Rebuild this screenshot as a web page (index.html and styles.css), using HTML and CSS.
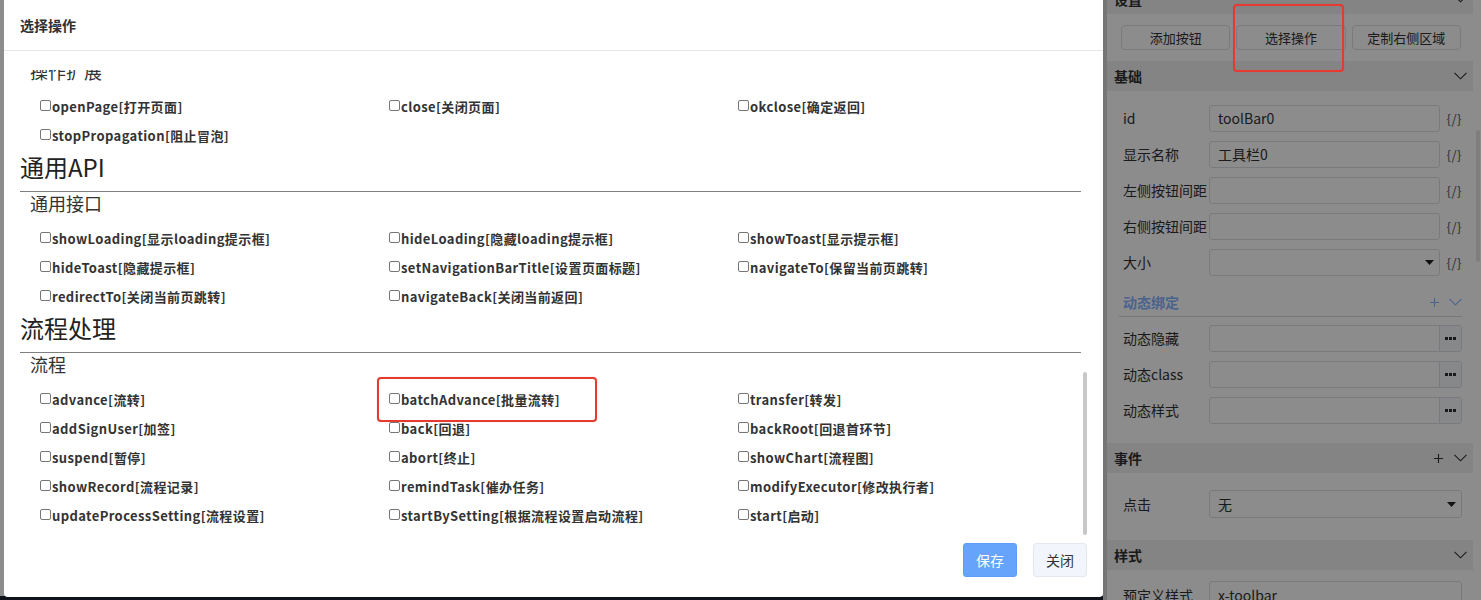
FILE: index.html
```html
<!DOCTYPE html>
<html lang="zh-CN">
<head>
<meta charset="utf-8">
<title>选择操作</title>
<link rel="stylesheet" href="styles.css">
</head>
<body>
<div class="app">
  <div class="workspace"><div class="ws-bottom"></div></div>
  <aside class="props">
    <div class="props-scroll">
      <section class="psec">
        <div class="psec-head"><span>设置</span><svg class="chev" width="13" height="8" viewBox="0 0 13 8"><polyline points="0.5,0.8 6.5,6.8 12.5,0.8"/></svg></div>
        <div class="btn-row">
          <button class="pbtn">添加按钮</button>
          <button class="pbtn">选择操作</button>
          <button class="pbtn">定制右侧区域</button>
        </div>
      </section>
      <section class="psec">
        <div class="psec-head"><span>基础</span><svg class="chev" width="13" height="8" viewBox="0 0 13 8"><polyline points="0.5,0.8 6.5,6.8 12.5,0.8"/></svg></div>
        <div class="psec-body">
          <div class="frow"><label class="flabel">id</label><div class="inp">toolBar0</div><span class="expr">{/}</span></div>
          <div class="frow"><label class="flabel">显示名称</label><div class="inp">工具栏0</div><span class="expr">{/}</span></div>
          <div class="frow"><label class="flabel">左侧按钮间距</label><div class="inp"></div><span class="expr">{/}</span></div>
          <div class="frow"><label class="flabel">右侧按钮间距</label><div class="inp"></div><span class="expr">{/}</span></div>
          <div class="frow"><label class="flabel">大小</label><div class="inp sel"><span></span><svg class="tri" width="9" height="5" viewBox="0 0 9 5"><path d="M0 0H9L4.5 5Z"/></svg></div><span class="expr">{/}</span></div>
          <div class="subhead"><span>动态绑定</span><span class="acts"><svg class="plus" width="9" height="9" viewBox="0 0 9 9"><path d="M4.5 0V9M0 4.5H9"/></svg><svg class="chev" width="13" height="8" viewBox="0 0 13 8"><polyline points="0.5,0.8 6.5,6.8 12.5,0.8"/></svg></span></div>
          <div class="frow"><label class="flabel">动态隐藏</label><div class="inp wide btnin"><span class="grow"></span><span class="more"><svg width="11" height="3" viewBox="0 0 11 3"><rect x="0" y="0" width="3" height="3"/><rect x="4" y="0" width="3" height="3"/><rect x="8" y="0" width="3" height="3"/></svg></span></div></div>
          <div class="frow"><label class="flabel">动态class</label><div class="inp wide btnin"><span class="grow"></span><span class="more"><svg width="11" height="3" viewBox="0 0 11 3"><rect x="0" y="0" width="3" height="3"/><rect x="4" y="0" width="3" height="3"/><rect x="8" y="0" width="3" height="3"/></svg></span></div></div>
          <div class="frow"><label class="flabel">动态样式</label><div class="inp wide btnin"><span class="grow"></span><span class="more"><svg width="11" height="3" viewBox="0 0 11 3"><rect x="0" y="0" width="3" height="3"/><rect x="4" y="0" width="3" height="3"/><rect x="8" y="0" width="3" height="3"/></svg></span></div></div>
        </div>
      </section>
      <section class="psec">
        <div class="psec-head"><span>事件</span><span class="acts"><svg class="plus" width="9" height="9" viewBox="0 0 9 9"><path d="M4.5 0V9M0 4.5H9"/></svg><svg class="chev" width="13" height="8" viewBox="0 0 13 8"><polyline points="0.5,0.8 6.5,6.8 12.5,0.8"/></svg></span></div>
        <div class="psec-body ev">
          <div class="frow"><label class="flabel">点击</label><div class="inp wide sel tall"><span>无</span><svg class="tri" width="9" height="5" viewBox="0 0 9 5"><path d="M0 0H9L4.5 5Z"/></svg></div></div>
        </div>
      </section>
      <section class="psec">
        <div class="psec-head"><span>样式</span><svg class="chev" width="13" height="8" viewBox="0 0 13 8"><polyline points="0.5,0.8 6.5,6.8 12.5,0.8"/></svg></div>
        <div class="psec-body st">
          <div class="frow"><label class="flabel">预定义样式</label><div class="inp wide tall">x-toolbar</div></div>
        </div>
      </section>
    </div>
    <div class="props-thumb"></div>
  </aside>
</div>

<div class="mask"></div>

<div class="modal">
  <div class="modal-head">选择操作</div>
  <div class="modal-body">
    <div class="scroller">
      <div class="content">
        <h3 class="sub">操作扩展</h3>
        <div class="grid">
          <div class="item"><span class="cb"></span>openPage[打开页面]</div>
          <div class="item"><span class="cb"></span>close[关闭页面]</div>
          <div class="item"><span class="cb"></span>okclose[确定返回]</div>
          <div class="item"><span class="cb"></span>stopPropagation[阻止冒泡]</div>
        </div>
        <h2 class="cat">通用API</h2>
        <h3 class="sub">通用接口</h3>
        <div class="grid">
          <div class="item"><span class="cb"></span>showLoading[显示loading提示框]</div>
          <div class="item"><span class="cb"></span>hideLoading[隐藏loading提示框]</div>
          <div class="item"><span class="cb"></span>showToast[显示提示框]</div>
          <div class="item"><span class="cb"></span>hideToast[隐藏提示框]</div>
          <div class="item"><span class="cb"></span>setNavigationBarTitle[设置页面标题]</div>
          <div class="item"><span class="cb"></span>navigateTo[保留当前页跳转]</div>
          <div class="item"><span class="cb"></span>redirectTo[关闭当前页跳转]</div>
          <div class="item"><span class="cb"></span>navigateBack[关闭当前返回]</div>
        </div>
        <h2 class="cat">流程处理</h2>
        <h3 class="sub">流程</h3>
        <div class="grid">
          <div class="item"><span class="cb"></span>advance[流转]</div>
          <div class="item"><span class="cb"></span>batchAdvance[批量流转]</div>
          <div class="item"><span class="cb"></span>transfer[转发]</div>
          <div class="item"><span class="cb"></span>addSignUser[加签]</div>
          <div class="item"><span class="cb"></span>back[回退]</div>
          <div class="item"><span class="cb"></span>backRoot[回退首环节]</div>
          <div class="item"><span class="cb"></span>suspend[暂停]</div>
          <div class="item"><span class="cb"></span>abort[终止]</div>
          <div class="item"><span class="cb"></span>showChart[流程图]</div>
          <div class="item"><span class="cb"></span>showRecord[流程记录]</div>
          <div class="item"><span class="cb"></span>remindTask[催办任务]</div>
          <div class="item"><span class="cb"></span>modifyExecutor[修改执行者]</div>
          <div class="item"><span class="cb"></span>updateProcessSetting[流程设置]</div>
          <div class="item"><span class="cb"></span>startBySetting[根据流程设置启动流程]</div>
          <div class="item"><span class="cb"></span>start[启动]</div>
        </div>
      </div>
    </div>
    <div class="scroll-thumb"></div>
  </div>
  <div class="modal-foot">
    <button class="btn btn-primary">保存</button>
    <button class="btn btn-plain">关闭</button>
  </div>
</div>

<div class="mark mark-modal"></div>
<div class="mark mark-panel"></div>
</body>
</html>
```

FILE: styles.css
```css
html, body {
  margin: 0;
  padding: 0;
}
body {
  width: 1481px;
  height: 600px;
  overflow: hidden;
  position: relative;
  font-family: "Noto Sans CJK SC", "Noto Sans", sans-serif;
  color: #303133;
}
.app {
  display: flex;
  height: 600px;
}
.workspace {
  flex: 1;
  background: #fff;
  display: flex;
  flex-direction: column;
  justify-content: flex-end;
}
.ws-bottom {
  height: 4px;
  background: #1d2533;
}
.props {
  width: 378px;
  box-sizing: border-box;
  border-left: 4px solid #d6d6d6;
  background: #fff;
  position: relative;
  overflow: hidden;
}
.props-scroll {
  width: 366px;
  margin-top: -16px;
}
.psec-head {
  height: 30px;
  background: #f0f0f0;
  display: flex;
  align-items: center;
  justify-content: space-between;
  padding: 0 6px 0 7px;
  font-size: 14px;
  font-weight: bold;
  color: #303133;
}
.chev polyline {
  fill: none;
  stroke: #303133;
  stroke-width: 1.1;
}
.plus path {
  stroke: #303133;
  stroke-width: 1.1;
  fill: none;
}
.acts {
  display: flex;
  align-items: center;
  gap: 11px;
}
.btn-row {
  display: flex;
  gap: 6px;
  padding: 11px 12px 11px 14px;
}
.pbtn {
  flex: 1;
  height: 25px;
  padding: 0;
  border: 1px solid #dcdfe6;
  border-radius: 4px;
  background: #fff;
  font-family: "Noto Sans CJK SC", sans-serif;
  font-size: 13px;
  color: #303133;
}
.psec-body {
  padding: 9px 11px 15px 16px;
}
.psec-body.ev {
  padding: 13px 11px 18px 16px;
}
.psec-body.st {
  padding: 7px 11px 0 16px;
}
.frow {
  display: flex;
  align-items: center;
  height: 36px;
}
.flabel {
  width: 86px;
  flex: none;
  font-size: 14px;
  color: #303133;
  white-space: nowrap;
}
.inp {
  width: 231px;
  height: 27px;
  box-sizing: border-box;
  border: 1px solid #dcdfe6;
  border-radius: 3px;
  background: #fff;
  font-size: 14px;
  color: #303133;
  padding: 0 8px;
  display: flex;
  align-items: center;
  flex: none;
}
.inp.wide {
  width: 253px;
}
.inp.tall {
  height: 28px;
}
.inp.sel {
  justify-content: space-between;
  padding-right: 5px;
}
.tri path {
  fill: #222;
}
.expr {
  width: 22px;
  text-align: right;
  font-size: 13px;
  color: #55585e;
  letter-spacing: 0.5px;
}
.btnin {
  padding: 0;
  overflow: hidden;
}
.btnin .grow {
  flex: 1;
}
.more {
  width: 21px;
  align-self: stretch;
  border-left: 1px solid #dcdfe6;
  background: #f5f7fa;
  display: flex;
  align-items: center;
  justify-content: center;
}
.more rect {
  fill: #303133;
}
.subhead {
  margin: 8px 0 3px -4px;
  height: 28px;
  padding-left: 4px;
  border-bottom: 1px solid #d9d9d9;
  display: flex;
  align-items: center;
  justify-content: space-between;
  font-size: 14px;
  font-weight: bold;
  color: #86b4ff;
}
.subhead .acts {
  gap: 10px;
}
.subhead .plus path {
  stroke: #86b4ff;
}
.subhead .chev polyline {
  stroke: #86b4ff;
}
.props-thumb {
  position: absolute;
  right: 1px;
  top: 130px;
  width: 4px;
  height: 132px;
  border-radius: 2px;
  background: #e6e6e6;
}

.mask {
  position: absolute;
  inset: 0;
  background: rgba(0, 0, 0, 0.45);
}

.modal {
  position: absolute;
  left: 4px;
  top: 0;
  width: 1099px;
  height: 597px;
  background: #fff;
  border-radius: 0 0 4px 4px;
  display: flex;
  flex-direction: column;
}
.modal-head {
  height: 50px;
  flex: none;
  border-bottom: 1px solid #e6e6e6;
  padding: 0 16px;
  display: flex;
  align-items: center;
  font-size: 14px;
  font-weight: bold;
  color: #303133;
}
.modal-body {
  position: relative;
  padding: 19px 22px 0 16px;
}
.scroller {
  height: 468px;
  overflow: hidden;
}
.content {
  margin-top: -10px;
}
.sub {
  margin: 0;
  padding-left: 10px;
  padding-bottom: 2px;
  font-size: 18px;
  line-height: 22px;
  font-weight: normal;
  color: #333;
}
.cat {
  margin: 0;
  font-size: 24px;
  line-height: 34px;
  padding-bottom: 7px;
  border-bottom: 1px solid #808080;
  font-weight: normal;
  color: #222;
}
.grid {
  display: grid;
  grid-template-columns: repeat(3, 349px);
  padding: 8px 0 0 20px;
}
.item {
  height: 29px;
  display: flex;
  align-items: center;
  font-size: 13px;
  font-weight: bold;
  color: #333;
  white-space: nowrap;
  letter-spacing: 0.4px;
}
.cb {
  width: 11px;
  height: 11px;
  box-sizing: border-box;
  border: 1px solid #767676;
  border-radius: 2px;
  background: #fff;
  margin-right: 1px;
  position: relative;
  top: -1px;
  flex: none;
}
.scroll-thumb {
  position: absolute;
  left: 1079px;
  top: 321px;
  width: 4px;
  height: 163px;
  border-radius: 2px;
  background: #c8c8c8;
}
.modal-foot {
  display: flex;
  justify-content: flex-end;
  gap: 16px;
  padding: 5px 16px 0;
}
.btn {
  width: 54px;
  height: 34px;
  padding: 0;
  border-radius: 3px;
  font-family: "Noto Sans CJK SC", sans-serif;
  font-size: 14px;
}
.btn-primary {
  background: #66a3fb;
  border: 1px solid #5e9cf6;
  color: #fff;
}
.btn-plain {
  background: #f2f5fb;
  border: 1px solid #e3e7ef;
  color: #333;
}

.mark {
  position: absolute;
  border: 2px solid #e53a2f;
  border-radius: 4px;
  box-shadow: 0 0 1px rgba(229, 58, 47, 0.6);
}
.mark-modal {
  left: 377px;
  top: 377px;
  width: 216px;
  height: 41px;
}
.mark-panel {
  left: 1233px;
  top: 4px;
  width: 107px;
  height: 64px;
}
```
